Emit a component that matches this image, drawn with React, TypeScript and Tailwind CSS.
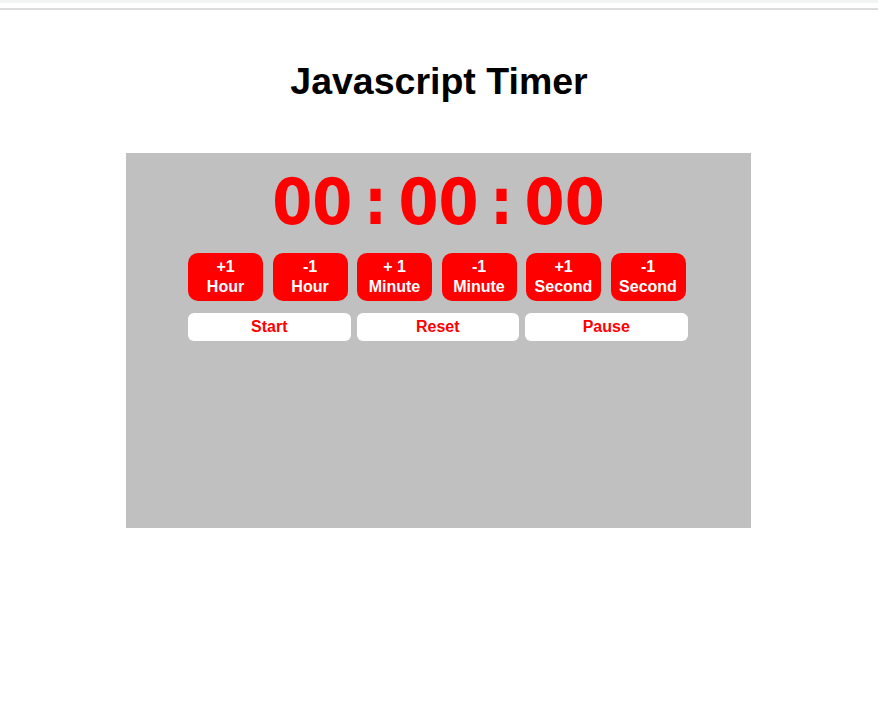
import React from "react";

const adjusters = [
  ["+1", "Hour"],
  ["-1", "Hour"],
  ["+ 1", "Minute"],
  ["-1", "Minute"],
  ["+1", "Second"],
  ["-1", "Second"],
];

const controls = ["Start", "Reset", "Pause"];

function TopBar() {
  return (
    <div>
      <div className="h-[3px] bg-[#f2f3f3]" />
      <div className="h-[5px] bg-white" />
      <div className="h-[2px] bg-[#dcdcdf]" />
    </div>
  );
}

function Clock() {
  const parts = ["00", ":", "00", ":", "00"];
  return (
    <div className="flex justify-center gap-[11.5px] font-['DejaVu_Sans_Condensed','DejaVu_Sans',sans-serif] text-[64px] font-bold leading-[75px] text-[#ff0000]">
      {parts.map((p, i) => (
        <span key={i}>{p}</span>
      ))}
    </div>
  );
}

export default function App() {
  return (
    <div className="min-h-screen bg-white font-['Liberation_Sans',Arial,sans-serif]">
      <TopBar />
      <h1 className="mt-[50px] text-center text-[37.5px] font-bold leading-[42px] text-black">
        Javascript Timer
      </h1>
      <div className="mt-[51px] flex justify-center pr-[1px]">
        <div className="h-[375px] w-[625px] bg-[#c0c0c0] pt-[12px]">
          <Clock />
          <div className="mt-[13px] pl-[62px]">
            <div className="flex gap-[9.5px]">
              {adjusters.map(([a, b], i) => (
                <button
                  key={i}
                  className="flex h-[48px] w-[75px] flex-col items-center justify-center rounded-[10px] bg-[#ff0000] text-[16px] font-bold leading-[20px] text-white"
                >
                  <span>{a}</span>
                  <span>{b}</span>
                </button>
              ))}
            </div>
            <div className="mt-[12px] flex gap-[6px]">
              {controls.map((c) => (
                <button
                  key={c}
                  className="flex h-[28px] w-[162.5px] items-center justify-center rounded-[6px] bg-white text-[16px] font-bold text-[#ff0000]"
                >
                  {c}
                </button>
              ))}
            </div>
          </div>
        </div>
      </div>
    </div>
  );
}
